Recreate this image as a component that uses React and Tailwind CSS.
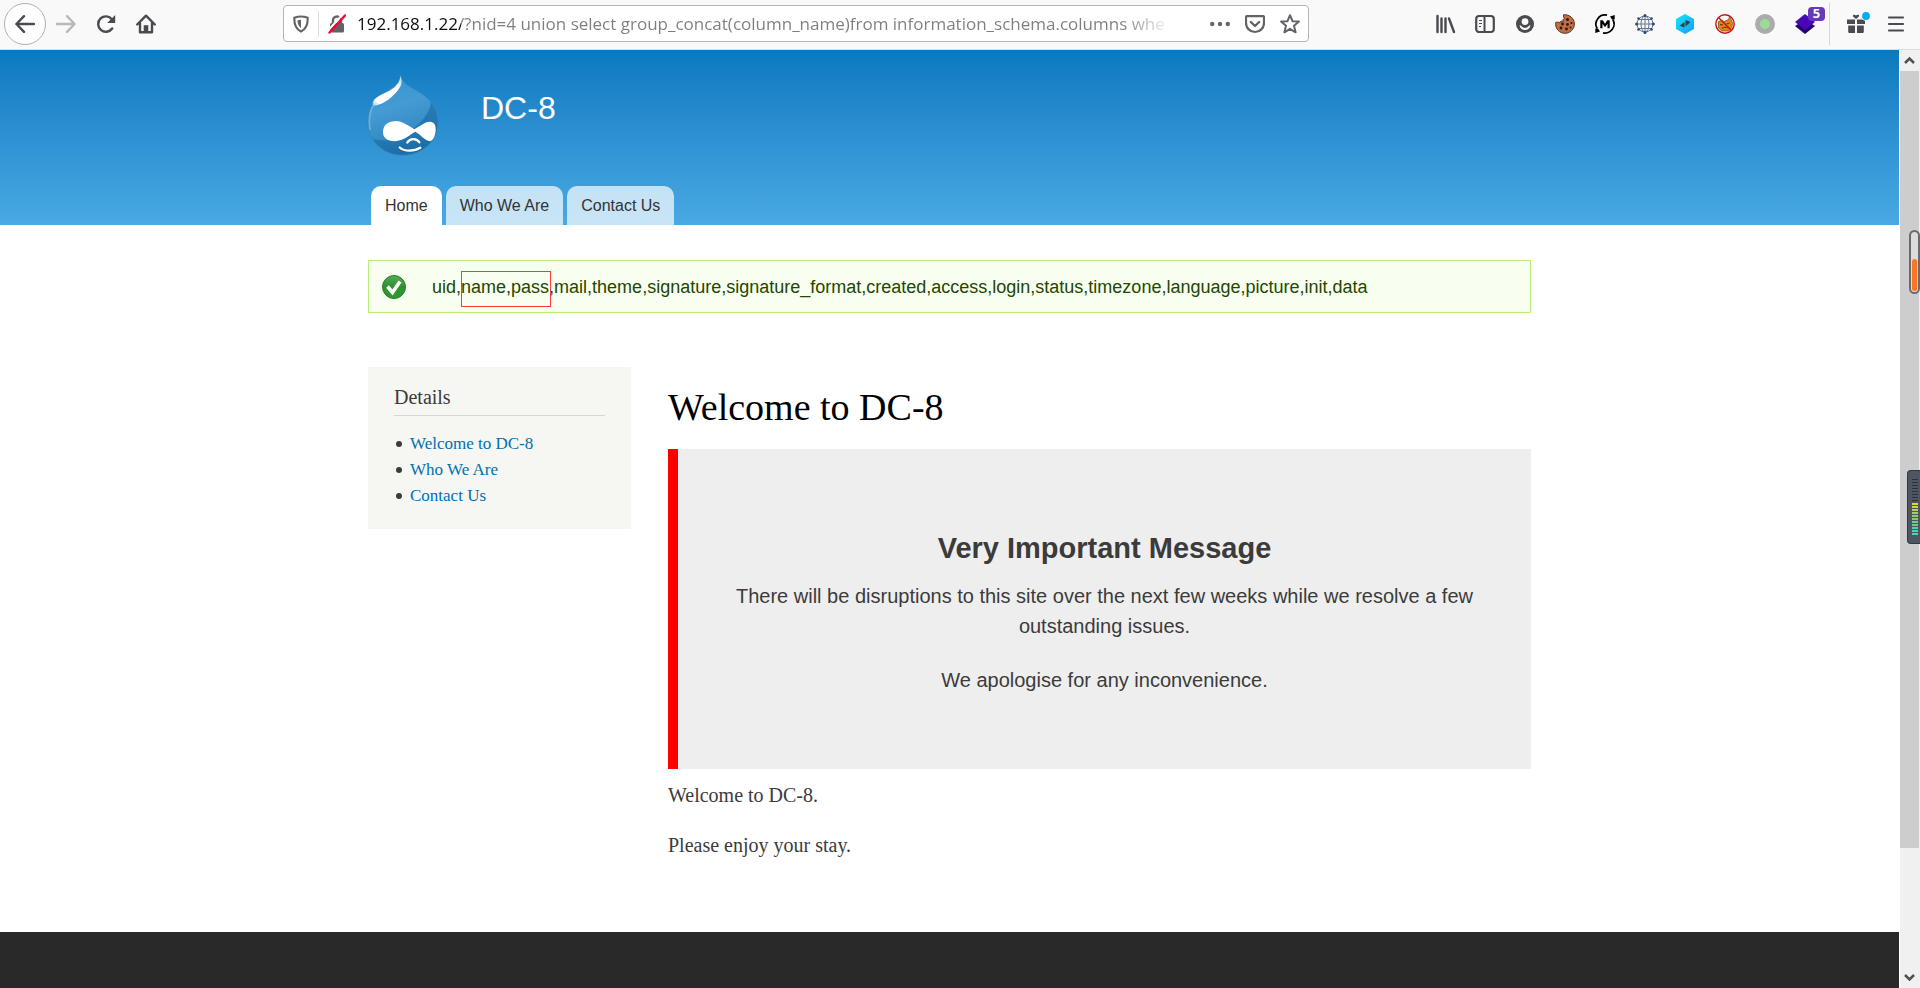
import React from "react";

const rightIcons = [
  {
    label: "Library",
    art: (
      <g stroke="#4a4a4f" strokeWidth="2.4" fill="none" strokeLinecap="round">
        <path d="M2.5 2v16M6.5 4.5V18M10.5 4.5V18M14 4.5l5 13.500" />
      </g>
    ),
  },
  {
    label: "Sidebars",
    art: (
      <g fill="none" stroke="#4a4a4f" strokeWidth="2.2">
        <rect x="1.200" y="2" width="17.600" height="16" rx="3" />
        <path d="M9.500 2v16" strokeWidth="2" />
        <path d="M4 6.500h3M4 9.500h3M4 12.500h2" strokeWidth="1.200" />
      </g>
    ),
  },
  {
    label: "Account",
    art: (
      <g>
        <circle cx="10" cy="10" r="9" fill="#4a4a4f" />
        <circle cx="10" cy="7.600" r="3.400" fill="#f9f9fa" />
        <path
          d="M4.500 11.300c.9 0 1.600.4 2.200 1.200 1.700 1.900 4.900 1.900 6.600 0 .6-.8 1.300-1.200 2.200-1.200-.4 3-2.600 4.700-5.500 4.700s-5.100-1.700-5.500-4.700z"
          fill="#f9f9fa"
        />
      </g>
    ),
  },
  {
    label: "Cookies",
    art: (
      <g>
        <path
          d="M8.500.8c-.3 2 .3 3 1.200 3.700-1.700.2-2 1.700-1.300 2.800C6 6.500 5 7.500 4.800 9 3.500 7.800 2 7.800.7 8.500-.1 14.800 4.500 19.300 10 19.300c5.300 0 9.400-4.200 9.400-9.300C19.400 4.300 14.500.1 8.500.8z"
          fill="#c26e43"
          stroke="#4b2a1c"
          strokeWidth=".9"
        />
        <g fill="#2b1a14">
          <circle cx="12.500" cy="5.500" r="1.500" />
          <circle cx="7.500" cy="10" r="1.400" />
          <circle cx="12.500" cy="10.500" r="1.400" />
          <circle cx="16.500" cy="9" r="1.100" />
          <circle cx="6" cy="14" r="1.400" />
          <circle cx="11.500" cy="15" r="1.400" />
          <circle cx="15.500" cy="13.500" r="1" />
        </g>
      </g>
    ),
  },
  {
    label: "Proxy mode",
    art: (
      <g fill="none" stroke="#000" strokeWidth="1.700">
        <path d="M12 1.200A9 9 0 0 0 2.200 14.500M8 18.800A9 9 0 0 0 17.800 5.500" />
        <path d="M.3 14.500v4.500l4.700-1.500-2-3zM19.700 5.500V1L15 2.500l2 3z" fill="#000" stroke="none" />
        <path d="M5.300 14.300V6.200h2.400L10 9.700l2.300-3.500h2.400v8.100h-2.200V9.800L10 13.200 7.500 9.800v4.500z" fill="#000" stroke="none" />
      </g>
    ),
  },
  {
    label: "Network",
    art: (
      <g>
        <g fill="none" stroke="#64748f" strokeWidth="1">
          <circle cx="10" cy="10" r="8" />
          <ellipse cx="10" cy="10" rx="4" ry="8" />
          <path d="M10 1v18M1 10h18M3 5.500h14M3 14.500h14" />
        </g>
        <g fill="#2f4a78">
          <circle cx="10" cy="1.600" r="1.500" />
          <circle cx="10" cy="18.400" r="1.500" />
          <circle cx="1.600" cy="10" r="1.500" />
          <circle cx="18.400" cy="10" r="1.500" />
          <circle cx="3.500" cy="4.500" r="1.300" />
          <circle cx="16.500" cy="4.500" r="1.300" />
          <circle cx="3.500" cy="15.500" r="1.300" />
          <circle cx="16.500" cy="15.500" r="1.300" />
        </g>
      </g>
    ),
  },
  {
    label: "Traffic",
    art: (
      <g>
        <linearGradient id="hex" x1="0" y1="0" x2="1" y2="1">
          <stop offset="0" stopColor="#16e8fb" />
          <stop offset="1" stopColor="#1899fb" />
        </linearGradient>
        <path d="M10 0l9 5v10l-9 5-9-5V5z" fill="url(#hex)" />
        <path d="M4.500 11.800l5-3.800v5.600zM15.500 8l-5 4.500V6z" fill="#2d4247" />
      </g>
    ),
  },
  {
    label: "Blocked",
    art: (
      <g>
        <path
          d="M3.500 7.500l3-1 3 1 4-2 1-2.500 1.500 2.500 1.500 3-.5 5-3.500 3.500H7l-3.500-3z"
          fill="#e8820f"
          stroke="#7a4a15"
          strokeWidth=".7"
        />
        <path d="M5 10.500l3 .5M11.500 10l3-1M7 14.500c2-1.500 4-1.500 5.500-.5" stroke="#5a3512" fill="none" />
        <circle cx="10" cy="10" r="9.200" fill="none" stroke="#c4141b" strokeWidth="1.400" />
        <path d="M3.500 3.500l13 13" stroke="#c4141b" strokeWidth="1.400" />
      </g>
    ),
  },
  {
    label: "Status",
    art: (
      <g>
        <circle cx="10" cy="10" r="10" fill="#ababab" />
        <circle cx="10" cy="10" r="5" fill="#98dc98" />
      </g>
    ),
  },
  {
    label: "Wappalyzer",
    badge: "5",
    art: (
      <g>
        <path d="M0 12l4-2.500h12l4 2.500-10 8z" fill="#230070" />
        <path d="M10 0l10 8-10 8L0 8z" fill="#4807b5" />
      </g>
    ),
  },
];

function IconButton({ label, children, badge }) {
  return (
    <button type="button" aria-label={label} className="relative flex h-10 w-10 items-center justify-center">
      <svg viewBox="0 0 20 20" className="h-5 w-5 overflow-visible" aria-hidden="true">
        {children}
      </svg>
      {badge && (
        <span className="absolute top-[3px] right-0 flex h-[14px] w-[17px] items-center justify-center rounded-sm bg-[#6739b7] font-['Open_Sans',sans-serif] text-[13px] font-bold text-white">
          {badge}
        </span>
      )}
    </button>
  );
}

function Toolbar() {
  return (
    <div className="flex h-[50px] items-center border-b border-[#dcdcdc] bg-[#f9f9fa] pr-1 pb-[2px] pl-1">
      <button
        type="button"
        aria-label="Back"
        className="flex h-[42px] w-[42px] items-center justify-center rounded-full border border-[#b1b1b3] bg-white"
      >
        <svg viewBox="0 0 20 20" className="h-5 w-5" fill="none" stroke="#4a4a4f" strokeWidth="2.400" strokeLinecap="round" strokeLinejoin="round">
          <path d="M9 2.200L1.400 10 9 17.800M1.600 10H19" />
        </svg>
      </button>
      <div className="flex">
        <IconButton label="Forward">
          <path d="M11 2.200l7.600 7.800-7.600 7.800M18.400 10H1" fill="none" stroke="#b9b9bb" strokeWidth="2.400" strokeLinecap="round" strokeLinejoin="round" />
        </IconButton>
        <IconButton label="Reload">
          <path d="M16.200 14.500A7.700 7.700 0 1 1 16 5.400" fill="none" stroke="#4a4a4f" strokeWidth="2.400" strokeLinecap="round" />
          <path d="M19.200 1v8h-8z" fill="#4a4a4f" />
        </IconButton>
        <IconButton label="Home">
          <path d="M1.200 10.500L10 1.700l8.800 8.800M4 9v9.200h12V9" fill="none" stroke="#4a4a4f" strokeWidth="2.400" strokeLinecap="round" strokeLinejoin="round" />
          <path d="M7.700 18v-6.800h4.600V18z" fill="#4a4a4f" />
        </IconButton>
      </div>

      <div className="mr-auto ml-[117px] flex h-[37px] min-w-0 max-w-[1026px] flex-1 items-center rounded-sm border border-[#b5b5b7] bg-white pr-px">
        <svg viewBox="0 0 18 20" className="mx-[9px] h-[18px] w-4 shrink-0" aria-hidden="true">
          <path d="M9 1.500c2.500 0 5 .5 7.500 1.500.3 7-1.500 12.500-7.500 15.500C3 15.500 1.200 10 1.500 3 4 2 6.500 1.500 9 1.500z" fill="none" stroke="#636367" strokeWidth="2.400" />
          <path d="M9 5.200v9.300C6.200 12.600 5 9.500 5 6c1.300-.5 2.600-.8 4-.8z" fill="#636367" />
        </svg>
        <span className="h-[26px] w-px bg-[#dddddf]" />
        <svg viewBox="0 0 18 20" className="mx-[9px] h-5 w-[18px] shrink-0" aria-hidden="true">
          <path d="M5 10V6.500a4 4 0 0 1 8 0V10" fill="none" stroke="#636367" strokeWidth="2.400" />
          <rect x="2" y="9" width="14" height="9.500" rx="1.500" fill="#636367" />
          <path d="M-.5 17L15 0" stroke="#fff" strokeWidth="2" />
          <path d="M1.500 18.500L17 1.500" stroke="#ff0039" strokeWidth="2.400" strokeLinecap="round" />
        </svg>
        <input
          type="text"
          aria-label="Address"
          readOnly
          value="192.168.1.22/?nid=4 union select group_concat(column_name)from information_schema.columns whe"
          className="ml-[2px] min-w-0 flex-1 bg-[linear-gradient(to_right,#0c0c0d_104px,#7d7d82_104px,#7d7d82_calc(100%-80px),transparent_calc(100%-30px))] bg-clip-text font-['Open_Sans',sans-serif] text-[17px] leading-7 text-transparent outline-none"
        />
        <button type="button" aria-label="Page actions" className="flex w-[35px] justify-center">
          <svg viewBox="0 0 20 20" className="h-5 w-5" fill="#636367">
            <circle cx="2.200" cy="10" r="2.200" />
            <circle cx="10" cy="10" r="2.200" />
            <circle cx="17.800" cy="10" r="2.200" />
          </svg>
        </button>
        <button type="button" aria-label="Save to Pocket" className="flex w-[35px] justify-center">
          <svg viewBox="0 0 20 20" className="h-5 w-5" fill="none" stroke="#636367" strokeWidth="2.200" strokeLinecap="round" strokeLinejoin="round">
            <path d="M2 2.200h16q1 0 1 1V9A9 9 0 0 1 1 9V3.200q0-1 1-1z" />
            <path d="M5.800 8l4.200 4 4.200-4" strokeWidth="2.400" />
          </svg>
        </button>
        <button type="button" aria-label="Bookmark" className="flex w-[35px] justify-center">
          <svg viewBox="0 0 20 20" className="h-5 w-5" fill="none" stroke="#636367" strokeWidth="2" strokeLinejoin="round">
            <path d="M10 1.200l2.500 6 6.400.4-4.900 4.200 1.600 6.500L10 14.800l-5.600 3.500L6 11.800 1.100 7.600l6.400-.4z" />
          </svg>
        </button>
      </div>

      <div className="flex items-center">
        {rightIcons.map((icon) => (
          <IconButton key={icon.label} label={icon.label} badge={icon.badge}>
            {icon.art}
          </IconButton>
        ))}
        <span className="mr-[6px] ml-1 h-[42px] w-px bg-[#d7d7db]" />
        <IconButton label="What's new">
          <path d="M1 5.500h8V10H1zM11 5.500h8V10h-8zM2.200 11.500H9V19H3.500q-1.300 0-1.300-1.300zM11 11.500h6.800v6.200q0 1.300-1.300 1.300H11z" fill="#4a4a4f" />
          <path d="M10 5L7 2.400C6.300.8 8.500 0 10 1.500 11.500 0 13.700.8 13 2.400z" fill="#4a4a4f" />
          <circle cx="20" cy="2" r="4.800" fill="#f9f9fa" />
          <circle cx="20" cy="2" r="3.900" fill="#00aef5" />
        </IconButton>
        <IconButton label="Menu">
          <path d="M3 3.500h14M3 10h14M3 16.500h14" stroke="#4a4a4f" strokeWidth="2.200" strokeLinecap="round" />
        </IconButton>
      </div>
    </div>
  );
}

function DropLogo() {
  return (
    <svg viewBox="0 0 216 242" className="h-[81px] w-[72px]" role="img" aria-label="Home">
      <defs>
        <linearGradient id="drop" x1="0" y1="0" x2="0.300" y2="1">
          <stop offset="0" stopColor="#2e92d3" />
          <stop offset="0.450" stopColor="#459bd3" />
          <stop offset="0.850" stopColor="#3489c3" />
          <stop offset="1" stopColor="#2272ab" />
        </linearGradient>
        <linearGradient id="shine" x1="1" y1="0" x2="0" y2="1">
          <stop offset="0" stopColor="#fff" stopOpacity="0.600" />
          <stop offset="0.300" stopColor="#fff" />
          <stop offset="0.850" stopColor="#fff" />
          <stop offset="1" stopColor="#fff" stopOpacity="0.400" />
        </linearGradient>
        <clipPath id="dropClip">
          <path d="M101 1c6 24 28 34 55 49 36 22 57 54 57 91 0 57-48 99-106 99S2 197 2 139c0-39 20-71 56-91C82 35 96 25 101 1z" />
        </clipPath>
      </defs>
      <g clipPath="url(#dropClip)">
        <path d="M0 0h216v242H0z" fill="url(#drop)" />
        <path d="M192 75c22 25 30 77 10 114-22 36-55 52-99 52-42 0-78-21-93-51 36 12 88 4 127-28 40-32 56-62 55-87z" fill="#1c6ca6" opacity=".68" />
        <path d="M9 165c-9-65 14-84 28-93" fill="none" stroke="#8bc5e9" strokeWidth="5" opacity=".55" />
      </g>
      <path d="M101 1c6 24 28 34 55 49 36 22 57 54 57 91 0 57-48 99-106 99S2 197 2 139c0-39 20-71 56-91C82 35 96 25 101 1z" fill="none" stroke="#3485bb" strokeWidth="3" opacity=".8" />
      <path d="M100 2c-1 20-13 34-31 44C44 59 20 66 17 84c-1 9 7 8 19 4 24-8 42-24 56-42 14-15 14-28 8-44z" fill="url(#shine)" />
      <path d="M83 138c24-2 43 17 59 24 18-8 31-23 48-22 14 2 17 13 16 27-2 16-7 30-17 31-13 1-29-20-44-28-17 8-31 26-59 28-26 1-39-11-38-29 1-20 14-30 35-31z" fill="#fff" />
      <path d="M121 202c8-13 27-14 36-1M98 217c14 13 44 12 62 1" fill="none" stroke="#fff" strokeWidth="7" strokeLinecap="round" />
    </svg>
  );
}

const tabs = ["Home", "Who We Are", "Contact Us"];
const details = ["Welcome to DC-8", "Who We Are", "Contact Us"];

function Scrollbar() {
  return (
    <div className="relative flex w-5 shrink-0 flex-col bg-[#f0f0f0]" aria-hidden="true">
      <svg viewBox="0 0 20 21" className="h-[21px] w-5" fill="none" stroke="#505050" strokeWidth="2.500">
        <path d="M5 13l4.500-4.500L14 13" />
      </svg>
      <div className="mr-px flex-[777] bg-[#cdcdcd]" />
      <div className="flex-[119]" />
      <svg viewBox="0 0 20 21" className="h-[21px] w-5" fill="none" stroke="#505050" strokeWidth="2.500">
        <path d="M5 8l4.500 4.500L14 8" />
      </svg>
      <div className="absolute top-[180px] right-0 flex h-16 w-[11px] items-end rounded-full border-2 border-[#6b6b6b] bg-[#dcdcdc] p-px">
        <div className="h-8 w-full rounded-full bg-[#ff7424]" />
      </div>
      <div className="absolute top-[420px] right-0 h-[74px] w-[13px] rounded-l border border-r-0 border-[#343842] bg-[#4f5563] pt-2 pl-1">
        <div className="flex w-[6px] flex-col gap-[2px]">
          {Array.from({ length: 8 }, (_, i) => (
            <div key={i} className="h-px bg-[#2d313a]" />
          ))}
        </div>
        <div className="mt-[2px] h-[33px] w-[6px] bg-[repeating-linear-gradient(to_bottom,transparent_0px,transparent_2px,#4f5563_2px,#4f5563_3px),linear-gradient(to_bottom,#e8d83a,#9ccf5b,#5fcf8d,#3fd6c4)]" />
      </div>
    </div>
  );
}

export default function App() {
  return (
    <div className="flex min-h-screen flex-col bg-white">
      <Toolbar />
      <div className="flex flex-1">
        <div className="mr-px flex min-w-0 flex-1 flex-col">
          <header className="bg-linear-to-b from-[#0779bf] to-[#48a9e4] font-['Liberation_Sans',Arial,sans-serif]">
            <div className="mx-auto flex h-[175px] max-w-[1163px] flex-col justify-between pt-[25px]">
              <div className="flex items-start gap-[42px]">
                <a href="#home" className="-ml-px">
                  <DropLogo />
                </a>
                <a href="#home" className="pt-[13px] text-[32px] leading-10 text-white">
                  DC-8
                </a>
              </div>
              <nav className="flex gap-1 pl-[3px]">
                {tabs.map((tab, i) => (
                  <a
                    key={tab}
                    href="#tab"
                    className={`rounded-t-[10px] px-[14px] text-base leading-[39px] text-[#333] ${i === 0 ? "bg-white" : "bg-white/70"}`}
                  >
                    {tab}
                  </a>
                ))}
              </nav>
            </div>
          </header>

          <div className="mx-auto w-full max-w-[1163px]">
            <div
              role="status"
              className="mt-[35px] flex h-[53px] items-center border border-[#bbee77] bg-[#f8fff0] pl-[13px] font-['Liberation_Sans',Arial,sans-serif] text-[18px] text-[#234600]"
            >
              <svg viewBox="0 0 24 24" className="mr-[26px] h-6 w-6" aria-hidden="true">
                <defs>
                  <linearGradient id="ok" x1="0" y1="0" x2="0" y2="1">
                    <stop offset="0" stopColor="#57ab57" />
                    <stop offset="0.500" stopColor="#2f9130" />
                    <stop offset="1" stopColor="#2c9c2c" />
                  </linearGradient>
                </defs>
                <circle cx="12" cy="12" r="11.500" fill="url(#ok)" stroke="#2c7d2d" strokeWidth="1" />
                <path d="M5.500 11.500l5 6 7.500-11" fill="none" stroke="#fff" strokeWidth="3.600" />
              </svg>
              <p className="pt-px">
                uid,
                <span className="relative">
                  name,pass
                  <span className="absolute -top-[6px] -right-[2px] -bottom-[10px] left-0 border border-[#fb3b3b]" />
                </span>
                ,mail,theme,signature,signature_format,created,access,login,status,timezone,language,picture,init,data
              </p>
            </div>

            <div className="mt-[54px] flex items-start gap-[37px] font-[Georgia,'Liberation_Serif',serif] text-[#3b3b3b]">
              <aside className="w-[263px] shrink-0 bg-[#f6f6f2] px-[26px] pt-[18px] pb-5">
                <h2 className="border-b border-[#d6d6d6] pb-[6px] text-[20px] leading-6">Details</h2>
                <ul className="mt-[15px] pl-[2px] text-[17px] leading-[26px]">
                  {details.map((item) => (
                    <li key={item} className="flex items-center gap-2">
                      <span className="h-[6px] w-[6px] rounded-full bg-[#3b3b3b]" />
                      <a href="#detail" className="text-[#0071b3]">
                        {item}
                      </a>
                    </li>
                  ))}
                </ul>
              </aside>
              <main className="min-w-0 flex-1">
                <h1 className="pt-[18px] text-[38px] leading-[44px] text-black">Welcome to DC-8</h1>
                <section className="mt-5 border-l-10 border-[#ff0000] bg-[#eeeeee] px-[50px] pt-[81px] pb-[74px] text-center font-['Liberation_Sans',Arial,sans-serif] text-[20px] leading-[30px]">
                  <h2 className="text-[29px] leading-9 font-bold">Very Important Message</h2>
                  <p className="mt-[15px]">
                    There will be disruptions to this site over the next few weeks while we resolve a few outstanding issues.
                  </p>
                  <p className="mt-6">We apologise for any inconvenience.</p>
                </section>
                <div className="flex flex-col gap-5 pt-[11px] pb-[72px] text-[20px] leading-[30px]">
                  <p>Welcome to DC-8.</p>
                  <p>Please enjoy your stay.</p>
                </div>
              </main>
            </div>
          </div>
          <footer className="flex-1 bg-[#292929]" />
        </div>
        <Scrollbar />
      </div>
    </div>
  );
}
